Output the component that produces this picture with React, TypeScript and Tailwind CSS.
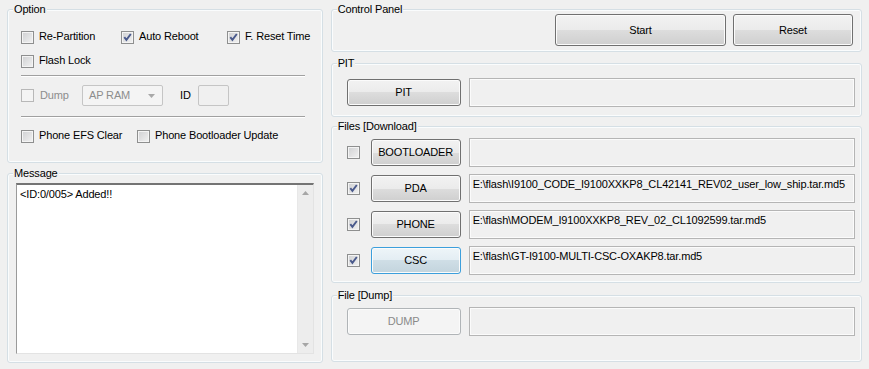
import React from "react"

function Group({ title, className, children }: { title: string; className?: string; children?: React.ReactNode }) {
  return (
    <div className={`relative rounded-[3px] border border-[#d5dfe5] shadow-[inset_0_0_0_1px_#fafcfd] ${className ?? ""}`}>
      <span className="absolute left-[5px] top-[-7px] bg-[#f0f0f0] px-[1px] leading-[13px] text-black">{title}</span>
      {children}
    </div>
  )
}

function Box({ checked, disabled }: { checked?: boolean; disabled?: boolean }) {
  if (disabled) {
    return <span className="block h-[13px] w-[13px] shrink-0 border border-[#b8b8b8] bg-[#f4f4f4]" />
  }
  return (
    <span className="relative block h-[13px] w-[13px] shrink-0 border border-[#8e8f8f] bg-[linear-gradient(135deg,#cfd0d2,#f2f2f2)] shadow-[inset_0_0_0_1px_#f4f4f4]">
      {checked && (
        <svg className="absolute left-0 top-0" width="11" height="11" viewBox="0 0 11 11">
          <path d="M2.3 5.2 L4.4 7.9 L8.8 2" fill="none" stroke="#4a5a8c" strokeWidth="1.9" />
        </svg>
      )}
    </span>
  )
}

function Check({ label, checked, className }: { label: string; checked?: boolean; className?: string }) {
  return (
    <div className={`flex h-[13px] items-center gap-[5px] ${className ?? ""}`}>
      <Box checked={checked} />
      <span className="-mt-[2px] leading-[13px]">{label}</span>
    </div>
  )
}

function Btn({ label, className, focused, disabled }: { label: string; className?: string; focused?: boolean; disabled?: boolean }) {
  let look = "border-[#707070] bg-[linear-gradient(to_bottom,#f2f2f2_0%,#ebebeb_50%,#dddddd_50%,#cfcfcf_100%)] text-black"
  if (focused) look = "border-[#3c9fdc] bg-[linear-gradient(to_bottom,#eef5f9_0%,#e3edf3_50%,#cfdee6_50%,#c3d4dd_100%)] text-black"
  if (disabled) look = "border-[#b0b4b7] bg-[#f4f4f4] text-[#8a8a8a]"
  return (
    <div className={`flex shrink-0 items-center justify-center rounded-[3px] border shadow-[inset_0_0_0_1px_#fbfbfb] ${look} ${className ?? ""}`}>
      {label}
    </div>
  )
}

function Field({ value }: { value?: string }) {
  return (
    <div className="h-[29px] flex-1 border border-[#b5b5b5] bg-[#f0f0f0] pl-[3px] pt-[3px] leading-[13px] shadow-[inset_0_0_0_1px_#fbfbfb] whitespace-nowrap">
      {value}
    </div>
  )
}

function Sep() {
  return <div className="mr-[17px] h-[2px] border-t border-[#a0a0a0] border-b border-b-white" />
}

const files = [
  { name: "BOOTLOADER", checked: false, path: "" },
  { name: "PDA", checked: true, path: "E:\\flash\\I9100_CODE_I9100XXKP8_CL42141_REV02_user_low_ship.tar.md5" },
  { name: "PHONE", checked: true, path: "E:\\flash\\MODEM_I9100XXKP8_REV_02_CL1092599.tar.md5" },
  { name: "CSC", checked: true, path: "E:\\flash\\GT-I9100-MULTI-CSC-OXAKP8.tar.md5", focused: true },
]

export default function App() {
  return (
    <div className="flex h-[369px] w-[869px] gap-[8px] bg-[#f0f0f0] px-[7px] pt-[9px] font-['Liberation_Sans',Arial,sans-serif] text-[11px] tracking-[-0.15px] text-black">
      {/* Left column */}
      <div className="flex w-[316px] flex-col">
        <Group title="Option" className="h-[154px] pl-[13px] pt-[21px]">
          <div className="flex">
            <Check label="Re-Partition" className="w-[100px]" />
            <Check label="Auto Reboot" checked className="w-[106px]" />
            <Check label="F. Reset Time" checked />
          </div>
          <Check label="Flash Lock" className="mt-[11px]" />
          <div className="mt-[7px]"><Sep /></div>
          <div className="mt-[8px] flex h-[21px] items-center">
            <Box disabled />
            <span className="ml-[6px] w-[42px] text-[#8d8d8d]">Dump</span>
            <div className="flex h-[21px] w-[81px] items-center justify-between rounded-[2px] border border-[#c5c5c5] bg-[#f4f4f4] pl-[6px] pr-[7px] text-[#8d8d8d]">
              <span>AP RAM</span>
              <svg width="7" height="4" viewBox="0 0 7 4"><path d="M0 0 H7 L3.5 4 Z" fill="#a8a8a8" /></svg>
            </div>
            <span className="ml-[17px] w-[18px]">ID</span>
            <div className="h-[21px] w-[31px] rounded-[2px] border border-[#c5c5c5] bg-[#f0f0f0]" />
          </div>
          <div className="mt-[10px]"><Sep /></div>
          <div className="mt-[12px] flex">
            <Check label="Phone EFS Clear" className="w-[116px]" />
            <Check label="Phone Bootloader Update" />
          </div>
        </Group>

        <Group title="Message" className="mt-[10px] h-[190px] px-[8px] pb-[8px] pt-[9px]">
          <div className="flex h-full border-l border-t-2 border-l-[#9a9a9a] border-t-[#747474] border-r border-b border-r-[#e3e3e3] border-b-[#e3e3e3] bg-white">
            <div className="flex-1 pl-[3px] pt-[3px] leading-[13px]">&lt;ID:0/005&gt; Added!!</div>
            <div className="flex w-[16px] flex-col items-center justify-between border-l border-[#e8e8e8] bg-[#ededed] py-[6px]">
              <svg width="7" height="4" viewBox="0 0 7 4"><path d="M3.5 0 L7 4 H0 Z" fill="#a6a6a6" /></svg>
              <svg width="7" height="4" viewBox="0 0 7 4"><path d="M0 0 H7 L3.5 4 Z" fill="#a6a6a6" /></svg>
            </div>
          </div>
        </Group>
      </div>

      {/* Right column */}
      <div className="flex w-[532px] flex-col">
        <Group title="Control Panel" className="flex h-[43px] items-start justify-end gap-[7px] pr-[8px] pt-[4px]">
          <Btn label="Start" className="h-[32px] w-[171px]" />
          <Btn label="Reset" className="h-[32px] w-[120px]" />
        </Group>

        <Group title="PIT" className="mt-[11px] flex h-[54px] items-start gap-[8px] pl-[15px] pr-[6px] pt-[14px]">
          <div className="flex h-[29px] w-[114px] items-center">
            <Btn label="PIT" className="h-[27px] w-[114px]" />
          </div>
          <Field />
        </Group>

        <Group title="Files [Download]" className="mt-[9px] flex h-[157px] flex-col gap-[7px] pl-[15px] pr-[6px] pt-[11px]">
          {files.map((f) => (
            <div key={f.name} className="flex h-[29px] items-center">
              <Box checked={f.checked} />
              <Btn label={f.name} focused={f.focused} className="ml-[11px] h-[27px] w-[90px]" />
              <div className="ml-[8px] flex h-[29px] flex-1">
                <Field value={f.path} />
              </div>
            </div>
          ))}
        </Group>

        <Group title="File [Dump]" className="mt-[12px] flex h-[67px] items-start gap-[8px] pl-[15px] pr-[6px] pt-[11px]">
          <div className="flex h-[29px] w-[114px] items-center">
            <Btn label="DUMP" disabled className="h-[27px] w-[114px]" />
          </div>
          <Field />
        </Group>
      </div>
    </div>
  )
}
